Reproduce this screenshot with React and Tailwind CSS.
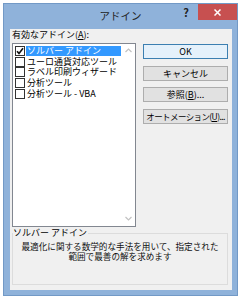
import React from 'react';

const font = { fontFamily: '"Noto Sans CJK JP", "Noto Sans", sans-serif' };

const addins = [
    { label: 'ソルバー アドイン', checked: true, selected: true },
    { label: 'ユーロ通貨対応ツール' },
    { label: 'ラベル印刷ウィザード' },
    { label: '分析ツール' },
    { label: '分析ツール - VBA' },
];

const Check = ({ checked }) => (
    <span className="w-[10px] h-[10px] shrink-0 border border-[#333] bg-white flex items-center justify-center">
        {checked && (
            <svg width="8" height="8" viewBox="0 0 8 8">
                <path d="M1 4.2 L3 6.4 L7 1.2" stroke="#111" strokeWidth="1.6" fill="none" />
            </svg>
        )}
    </span>
);

const Button = ({ children, primary, className = '' }) => (
    <div
        className={`h-[15px] flex items-center justify-center whitespace-nowrap leading-none text-black border ${primary ? 'border-[#3c7fb1] bg-[#e5f1fb]' : 'border-[#adadad] bg-[#e1e1e1]'} ${className || 'text-[9px]'}`}
    >
        {children}
    </div>
);

const Chevron = ({ up }) => (
    <svg width="7" height="5" viewBox="0 0 7 5">
        <path d={up ? 'M0.5 4 L3.5 1 L6.5 4' : 'M0.5 1 L3.5 4 L6.5 1'} stroke="#c2c2c2" strokeWidth="1.2" fill="none" />
    </svg>
);

export default function App() {
    return (
        <div className="w-[241px] h-[300px] bg-white pt-[3px] pl-[3px] overflow-hidden" style={font}>
            <div className="w-[235px] h-[293px] bg-[#8fb2da] border border-[#7299c6] flex flex-col">
                {/* title bar */}
                <div className="h-[25px] grid grid-cols-[1fr_auto_1fr]">
                    <div />
                    <div className="text-[10.5px] leading-none text-[#222] pt-[7px]">アドイン</div>
                    <div className="flex justify-end items-start">
                        <div className="w-[24px] h-[16px] flex items-center justify-center text-[11px] font-bold text-[#222] leading-none pt-[1px]">?</div>
                        <div className="w-[39px] h-[16px] bg-[#c75050] flex items-center justify-center">
                            <svg width="7" height="7" viewBox="0 0 7 7">
                                <path d="M0.5 0.5 L6.5 6.5 M6.5 0.5 L0.5 6.5" stroke="#fff" strokeWidth="1.5" />
                            </svg>
                        </div>
                    </div>
                </div>

                {/* client */}
                <div className="ml-[6px] mr-[5px] h-[261px] bg-[#f0f0f0] pl-[2px] text-black">
                    <div className="flex gap-[7px]">
                        <div className="w-[124px]">
                            <div className="h-[14px] text-[9px] leading-[12px]">
                                有効なアドイン(<span className="underline">A</span>):
                            </div>
                            <div className="h-[184px] border border-[#828790] bg-white flex">
                                <div className="flex-1 pt-[1.5px] pl-[2px]">
                                    {addins.map((a, i) => (
                                        <div key={i} className="h-[10.75px] flex items-center gap-[1px]">
                                            <Check checked={a.checked} />
                                            <span
                                                className={`flex-1 h-[10px] px-[1px] text-[9px] leading-[10px] whitespace-nowrap ${a.selected ? 'bg-[#3399ff] text-white' : ''}`}
                                            >
                                                {a.label}
                                            </span>
                                        </div>
                                    ))}
                                </div>
                                <div className="w-[14px] flex flex-col justify-between items-center pt-[4px] pb-[5px]">
                                    <Chevron up />
                                    <Chevron />
                                </div>
                            </div>
                        </div>
                        <div className="w-[85px] pt-[15px] flex flex-col gap-[6.6px]">
                            <Button primary>OK</Button>
                            <Button>キャンセル</Button>
                            <Button>
                                参照(<span className="underline">B</span>)...
                            </Button>
                            <Button className="text-[8.5px] tracking-[-0.6px]">
                                オートメーション(<span className="underline">U</span>)...
                            </Button>
                        </div>
                    </div>

                    <fieldset className="mt-[1px] w-[216px] h-[57px] border border-[#dcdcdc] px-[4px]">
                        <legend className="text-[9px] leading-[10px] -ml-[4px] pr-[1px]">ソルバー アドイン</legend>
                        <div className="pt-[4px] text-[8.6px] leading-[9.5px] text-center text-[#111]">
                            最適化に関する数学的な手法を用いて、指定された
                            <br />
                            範囲で最善の解を求めます
                        </div>
                    </fieldset>
                </div>
            </div>
        </div>
    );
}
